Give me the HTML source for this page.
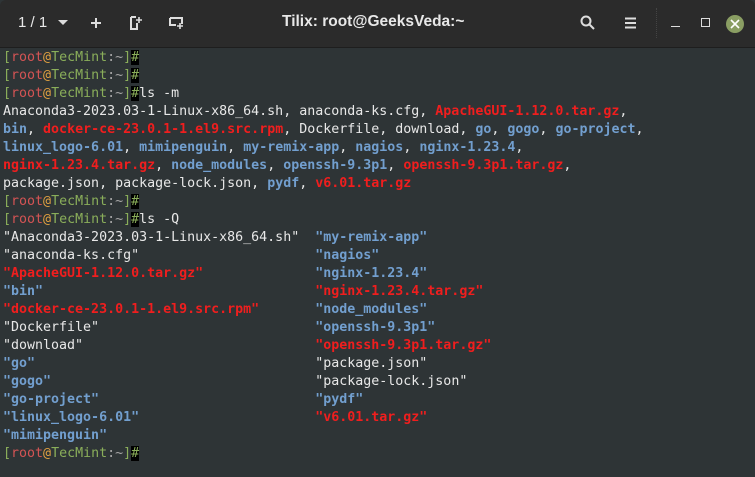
<!DOCTYPE html>
<html><head><meta charset="utf-8"><style>
html,body{margin:0;padding:0;width:755px;height:477px;overflow:hidden;background:#2e3436}
.hdr{position:absolute;left:0;top:0;width:755px;height:47px;background:#2b2b2b;border-bottom:1px solid #1e1e1e;border-radius:6px 6px 0 0;font-family:"Liberation Sans","DejaVu Sans",sans-serif;color:#e8e8e8}
.t{position:absolute;white-space:nowrap}
.term{position:absolute;left:3px;top:49px;font-family:"DejaVu Sans Mono","Liberation Mono",monospace;font-size:13.3px;line-height:18px;color:#e8e8e8;white-space:pre}
.b{color:#729fcf;font-weight:bold}.r{color:#f01e1e;font-weight:bold}
.g{color:#8aae5a}.pr{color:#d45454}.at{color:#e0a040}.c{color:#a6a6a6}
.cur{background:#000;color:#8aae5a}
</style></head><body>
<div class="hdr">
<div class="t" style="left:18px;top:14px;font-size:15px">1 / 1</div>
<svg class="t" style="left:58px;top:20px" width="10" height="6"><path d="M0 0H10L5 5Z" fill="#ddd"/></svg>
<svg class="t" style="left:90px;top:17px" width="12" height="12"><path d="M6 1V11M1 6H11" stroke="#ddd" stroke-width="2"/></svg>
<svg class="t" style="left:129px;top:15px" width="14" height="16"><path d="M2 2H7M2 2V14H8V8" stroke="#ddd" stroke-width="2" fill="none"/><path d="M10 2V8M7 5H13" stroke="#ddd" stroke-width="1.6"/></svg>
<svg class="t" style="left:169px;top:16px" width="16" height="14"><path d="M1 2H13V8M1 2V9H7" stroke="#ddd" stroke-width="2" fill="none"/><path d="M11 7V13M8 10H14" stroke="#ddd" stroke-width="1.6"/></svg>
<div class="t" style="left:282px;top:13px;font-size:15.5px;font-weight:bold">Tilix: root@GeeksVeda:~</div>
<svg class="t" style="left:580px;top:15px" width="16" height="16"><circle cx="6" cy="6" r="4.5" stroke="#ddd" stroke-width="2" fill="none"/><path d="M9.5 9.5L14 14" stroke="#ddd" stroke-width="2"/></svg>
<svg class="t" style="left:625px;top:17px" width="11" height="12"><path d="M0 1.5H11M0 6H11M0 10.5H11" stroke="#ddd" stroke-width="2"/></svg>
<div class="t" style="left:656px;top:8px;height:30px;border-left:1px dotted #444"></div>
<div class="t" style="left:671px;top:26px;width:9px;height:1px;background:#ddd"></div>
<div class="t" style="left:701px;top:18px;width:7px;height:7px;border:1px solid #ddd"></div>
<div class="t" style="left:726px;top:15px;width:18px;height:18px;border-radius:50%;background:#8a9e63"></div>
<svg class="t" style="left:730px;top:19px" width="10" height="10"><path d="M1 1L9 9M9 1L1 9" stroke="#fff" stroke-width="1.6"/></svg>
</div>
<div class="term"><span class="g">[</span><span class="pr">root</span><span class="at">@</span><span class="g">TecMint</span><span class="c">:~</span><span class="g">]</span><span class="cur">#</span>
<span class="g">[</span><span class="pr">root</span><span class="at">@</span><span class="g">TecMint</span><span class="c">:~</span><span class="g">]</span><span class="cur">#</span>
<span class="g">[</span><span class="pr">root</span><span class="at">@</span><span class="g">TecMint</span><span class="c">:~</span><span class="g">]</span><span class="cur">#</span>ls -m
Anaconda3-2023.03-1-Linux-x86_64.sh, anaconda-ks.cfg, <span class="r">ApacheGUI-1.12.0.tar.gz</span>,
<span class="b">bin</span>, <span class="r">docker-ce-23.0.1-1.el9.src.rpm</span>, Dockerfile, download, <span class="b">go</span>, <span class="b">gogo</span>, <span class="b">go-project</span>,
<span class="b">linux_logo-6.01</span>, <span class="b">mimipenguin</span>, <span class="b">my-remix-app</span>, <span class="b">nagios</span>, <span class="b">nginx-1.23.4</span>,
<span class="r">nginx-1.23.4.tar.gz</span>, <span class="b">node_modules</span>, <span class="b">openssh-9.3p1</span>, <span class="r">openssh-9.3p1.tar.gz</span>,
package.json, package-lock.json, <span class="b">pydf</span>, <span class="r">v6.01.tar.gz</span>
<span class="g">[</span><span class="pr">root</span><span class="at">@</span><span class="g">TecMint</span><span class="c">:~</span><span class="g">]</span><span class="cur">#</span>
<span class="g">[</span><span class="pr">root</span><span class="at">@</span><span class="g">TecMint</span><span class="c">:~</span><span class="g">]</span><span class="cur">#</span>ls -Q
"Anaconda3-2023.03-1-Linux-x86_64.sh"  <span class="b">"my-remix-app"</span>
"anaconda-ks.cfg"                      <span class="b">"nagios"</span>
<span class="r">"ApacheGUI-1.12.0.tar.gz"</span>              <span class="b">"nginx-1.23.4"</span>
<span class="b">"bin"</span>                                  <span class="r">"nginx-1.23.4.tar.gz"</span>
<span class="r">"docker-ce-23.0.1-1.el9.src.rpm"</span>       <span class="b">"node_modules"</span>
"Dockerfile"                           <span class="b">"openssh-9.3p1"</span>
"download"                             <span class="r">"openssh-9.3p1.tar.gz"</span>
<span class="b">"go"</span>                                   "package.json"
<span class="b">"gogo"</span>                                 "package-lock.json"
<span class="b">"go-project"</span>                           <span class="b">"pydf"</span>
<span class="b">"linux_logo-6.01"</span>                      <span class="r">"v6.01.tar.gz"</span>
<span class="b">"mimipenguin"</span>
<span class="g">[</span><span class="pr">root</span><span class="at">@</span><span class="g">TecMint</span><span class="c">:~</span><span class="g">]</span><span class="cur">#</span></div>
</body></html>
